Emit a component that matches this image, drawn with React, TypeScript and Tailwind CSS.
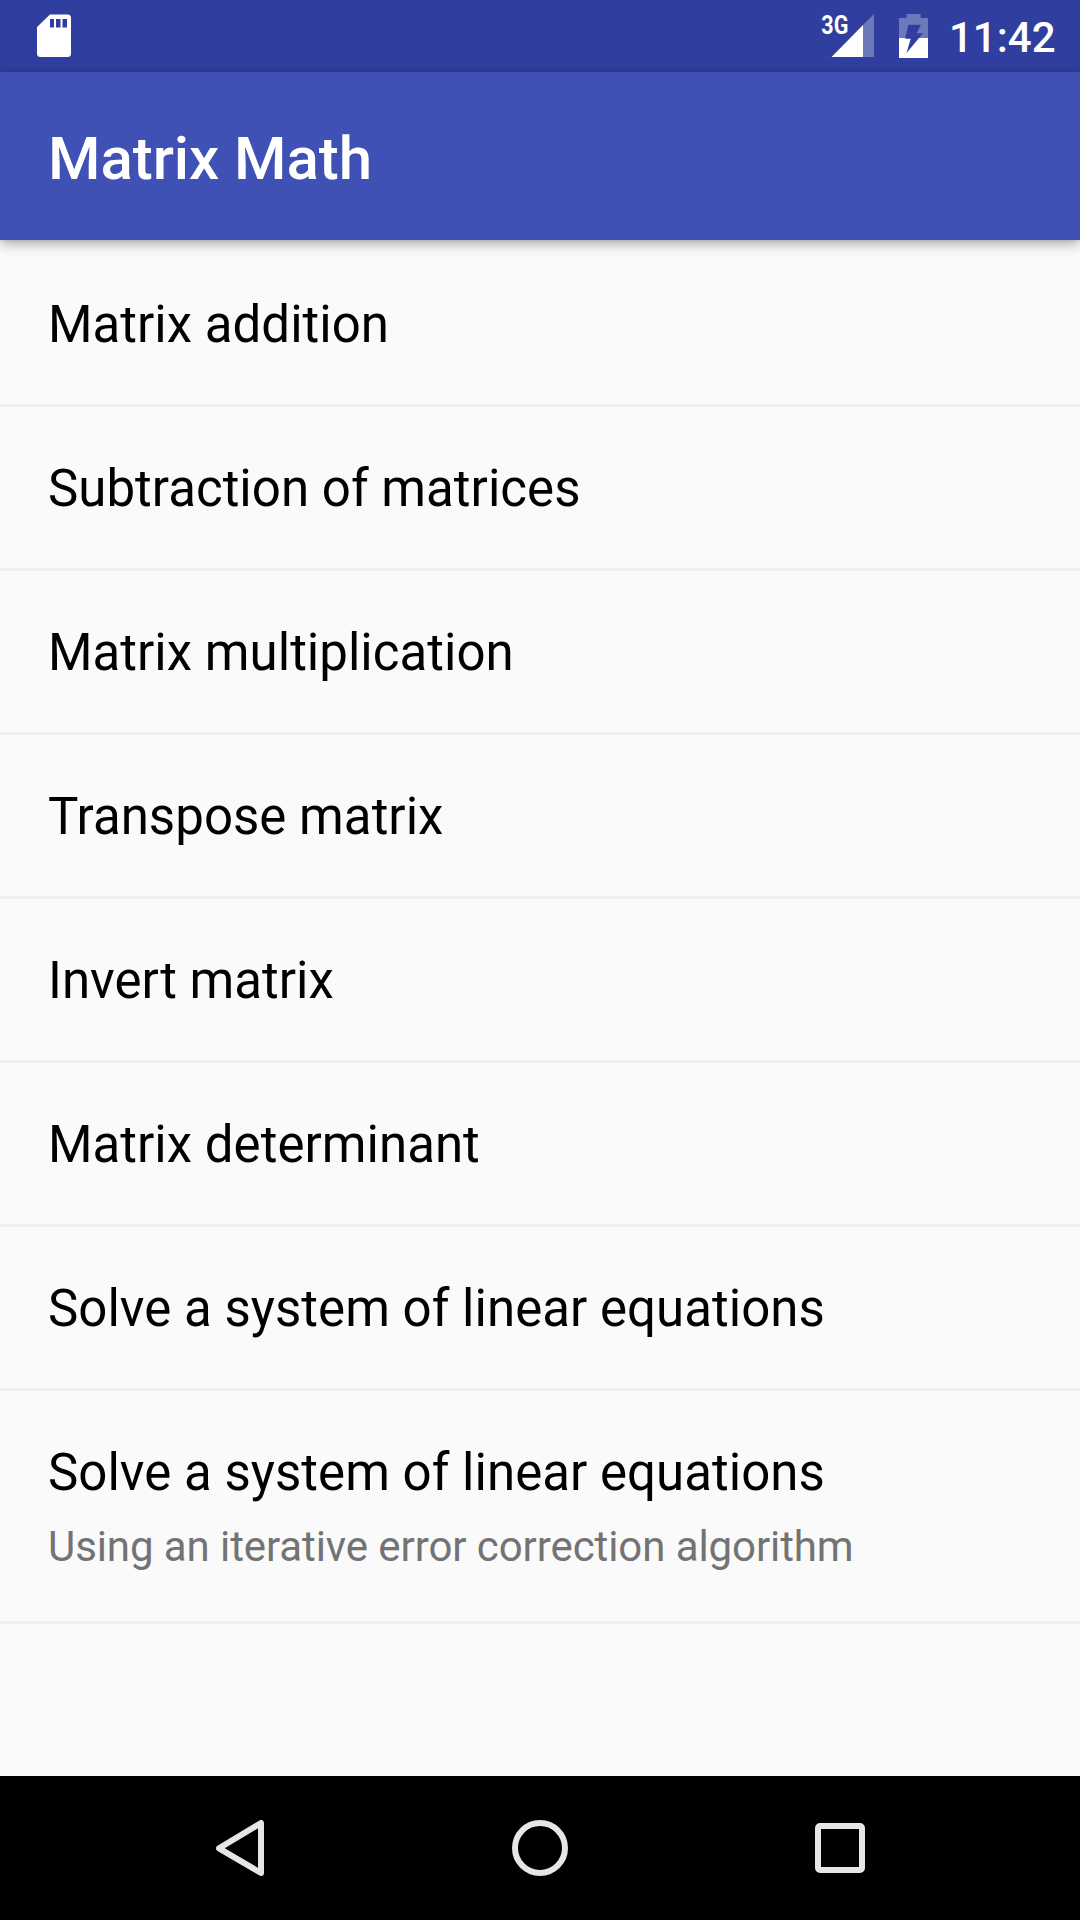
const items: { title: string; subtitle?: string }[] = [
  { title: 'Matrix addition' },
  { title: 'Subtraction of matrices' },
  { title: 'Matrix multiplication' },
  { title: 'Transpose matrix' },
  { title: 'Invert matrix' },
  { title: 'Matrix determinant' },
  { title: 'Solve a system of linear equations' },
  { title: 'Solve a system of linear equations', subtitle: 'Using an iterative error correction algorithm' },
];

function SdCardIcon() {
  return (
    <svg width="34" height="43" viewBox="0 0 34 43" className="block shrink-0">
      <path
        fill="#fff"
        fillRule="evenodd"
        d="M13 0.500H30.500Q34 0.500 34 4V39.500Q34 43 30.500 43H3.500Q0 43 0 39.500V13ZM13 5V13.500H17V5ZM19 5V13.500H23.500V5ZM25.500 5V13.500H30V5Z"
      />
    </svg>
  );
}

function SignalIcon() {
  return (
    <svg width="58" height="44" viewBox="-4 0 58 44" className="block shrink-0 overflow-visible">
      <path fill="#fff" fillOpacity="0.3" d="M53 0V43H42V11Z" />
      <path fill="#fff" d="M42 11V43H10.500Z" />
      <text x="0.3" y="19.500" fill="#fff" fontSize="25" fontWeight="700" textLength="27" lengthAdjust="spacingAndGlyphs">
        3G
      </text>
    </svg>
  );
}

function BatteryIcon() {
  return (
    <svg width="29" height="44" viewBox="0 0 29 44" className="block shrink-0">
      <path
        fill="#fff"
        fillOpacity="0.3"
        d="M7.500 0H21.500V4H29V24H20L24 19.300H17.500L22 10.700H9.300L6.300 24H0V4H7.500Z"
      />
      <path fill="#fff" d="M0 24H6.300V24.700H11.700L7.500 39L20 24H29V44H0Z" />
    </svg>
  );
}

export default function App() {
  return (
    <div className="flex h-[1920px] w-[1080px] flex-col overflow-hidden bg-[#fafafa] font-['Roboto',sans-serif]">
      <div className="flex h-[72px] items-start bg-[#303f9f] pl-[37px] pr-[24px] pt-[14px]">
        <SdCardIcon />
        <div className="ml-auto flex items-start">
          <SignalIcon />
          <div className="ml-[24px]">
            <BatteryIcon />
          </div>
          <span className="-mt-px ml-[21px] w-[107px] whitespace-nowrap text-[42px] font-medium leading-[49px] text-white">11:42</span>
        </div>
      </div>
      <header className="relative h-[168px] bg-[#3f51b5] pl-12 pt-[52px] shadow-[0_4px_12px_rgba(0,0,0,0.3),0_0_5px_rgba(0,0,0,0.14)]">
        <h1 className="text-[60px] font-medium leading-[70px] tracking-[-0.05px] text-white">Matrix Math</h1>
      </header>
      <ul className="flex-1 pt-[3px]">
        {items.map((item, i) => (
          <li
            key={i}
            className={`border-b-[3px] border-[#f1f1f1] pl-12 pt-[52px] text-black ${item.subtitle ? 'h-[233px]' : 'h-[164px]'}`}
          >
            <p className="text-[51px] leading-[60px] tracking-[0.03px]">{item.title}</p>
            {item.subtitle && (
              <p className="mt-[19px] text-[42px] leading-[49px] tracking-[-0.085px] text-[#737373]">{item.subtitle}</p>
            )}
          </li>
        ))}
      </ul>
      <nav className="flex h-36 items-center bg-black pl-[216px]">
        <svg width="48" height="56" viewBox="0 0 48 56" fill="none" stroke="#e6e6e6" strokeWidth="6" strokeLinejoin="round">
          <path d="M45 3V53L3 28.300Z" />
        </svg>
        <svg width="56" height="56" viewBox="0 0 56 56" fill="none" stroke="#e6e6e6" strokeWidth="6" className="ml-[248px]">
          <circle cx="28" cy="28" r="25" />
        </svg>
        <svg width="50" height="50" viewBox="0 0 50 50" fill="none" stroke="#e6e6e6" strokeWidth="6" className="ml-[247px]">
          <rect x="3" y="3" width="44" height="44" rx="2" />
        </svg>
      </nav>
    </div>
  );
}
